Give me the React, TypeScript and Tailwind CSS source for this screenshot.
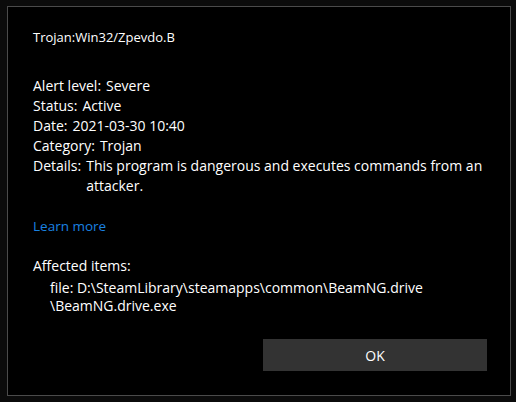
import React from "react";

const rows: [string, string][] = [
  ["Alert level:", "Severe"],
  ["Status:", "Active"],
  ["Date:", "2021-03-30 10:40"],
  ["Category:", "Trojan"],
];

export default function App() {
  return (
    <div
      className="w-[516px] h-[402px] bg-[#0b0b0b] pt-[6px] pl-[7px] text-white"
      style={{ fontFamily: '"Open Sans", "Noto Sans", sans-serif' }}
    >
      <div className="w-[504px] h-[390px] border border-[#4b4b4b] bg-black flex flex-col pl-[25px]">
        <div className="mt-[20px] text-[13px] leading-[20px]">Trojan:Win32/Zpevdo.B</div>
        <div className="mt-[29px] flex flex-col text-[14px] leading-[20px]">
          {rows.map(([k, v]) => (
            <div key={k} className="flex gap-[5px]">
              <span>{k}</span>
              <span>{v}</span>
            </div>
          ))}
          <div className="flex gap-[5px]">
            <span>Details:</span>
            <span className="whitespace-nowrap">
              This program is dangerous and executes commands from an
              <br />
              attacker.
            </span>
          </div>
        </div>
        <div className="mt-[20px] text-[13.5px] leading-[20px] text-[#1a82e2]">Learn more</div>
        <div className="mt-[20px] text-[14px] leading-[20px]">Affected items:</div>
        <div className="mt-[3px] pl-[17px] text-[14px] leading-[18px] whitespace-nowrap">
          <div>file: D:\SteamLibrary\steamapps\common\BeamNG.drive</div>
          <div>\BeamNG.drive.exe</div>
        </div>
        <div className="mt-[24px] self-end mr-[23px] w-[224px] h-[32px] bg-[#333333] flex items-center justify-center text-[14px]">
          OK
        </div>
      </div>
    </div>
  );
}
